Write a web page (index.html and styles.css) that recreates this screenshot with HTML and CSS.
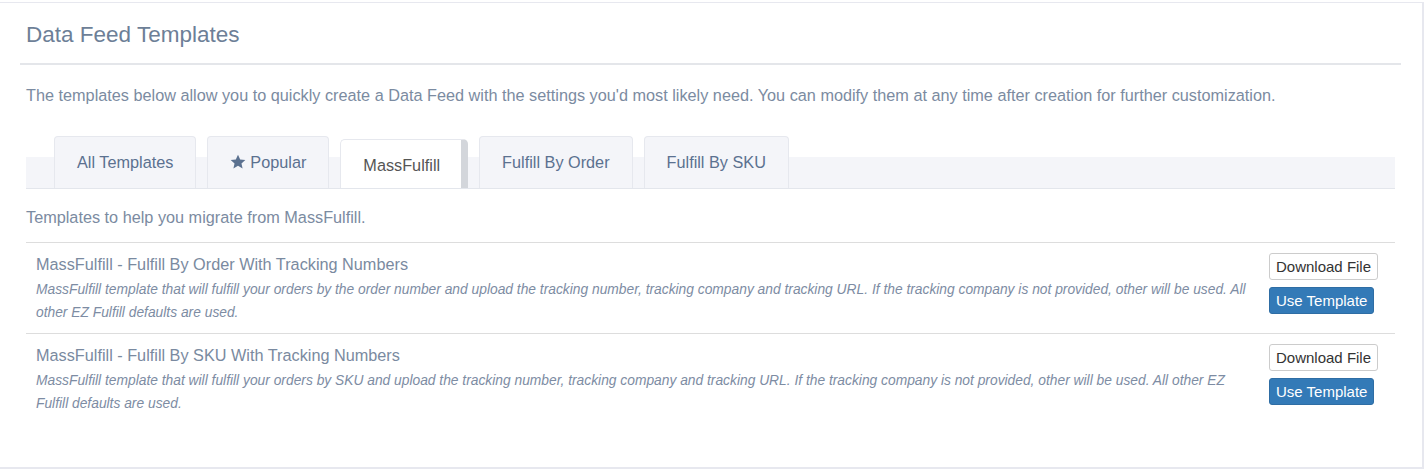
FILE: index.html
```html
<!DOCTYPE html>
<html lang="en">
<head>
    <meta charset="UTF-8">
    <meta name="viewport" content="width=device-width, initial-scale=1.0">
    <title>Data Feed Templates</title>
    <link rel="stylesheet" href="styles.css">
</head>
<body>
    <div class="panel">
        <div class="panel-heading">
            <h3>Data Feed Templates</h3>
        </div>

        <div class="panel-body">
            <p class="intro">The templates below allow you to quickly create a Data Feed with the settings you'd most likely need. You can modify them at any time after creation for further customization.</p>

            <ul class="tabs">
                <li class="tab">All Templates</li>
                <li class="tab">
                    <svg class="star" viewBox="0 0 24 24" width="16" height="16"><path d="M12 1l3.3 7.1 7.7.8-5.8 5.2 1.7 7.7L12 17.8l-6.9 4 1.7-7.7L1 8.9l7.7-.8z"/></svg>
                    Popular
                </li>
                <li class="tab active">MassFulfill</li>
                <li class="tab">Fulfill By Order</li>
                <li class="tab">Fulfill By SKU</li>
            </ul>

            <p class="tab-note">Templates to help you migrate from MassFulfill.</p>

            <div class="template-list">
                <div class="template">
                    <div class="template-info">
                        <div class="template-name">MassFulfill - Fulfill By Order With Tracking Numbers</div>
                        <div class="template-desc">MassFulfill template that will fulfill your orders by the order number and upload the tracking number, tracking company and tracking URL. If the tracking company is not provided, other will be used. All other EZ Fulfill defaults are used.</div>
                    </div>
                    <div class="template-actions">
                        <button class="btn btn-default">Download File</button>
                        <button class="btn btn-primary">Use Template</button>
                    </div>
                </div>
                <div class="template">
                    <div class="template-info">
                        <div class="template-name">MassFulfill - Fulfill By SKU With Tracking Numbers</div>
                        <div class="template-desc">MassFulfill template that will fulfill your orders by SKU and upload the tracking number, tracking company and tracking URL. If the tracking company is not provided, other will be used. All other EZ Fulfill defaults are used.</div>
                    </div>
                    <div class="template-actions">
                        <button class="btn btn-default">Download File</button>
                        <button class="btn btn-primary">Use Template</button>
                    </div>
                </div>
            </div>
        </div>
    </div>
</body>
</html>
```

FILE: styles.css
```css
body {
    margin: 0;
    background-color: #ffffff;
    font-family: "Liberation Sans", Arial, sans-serif;
    color: #7b8ba1;
}

.panel {
    margin-top: 2px;
    height: 464px;
    border-top: 1px solid #e7e8ef;
    border-right: 2px solid #e7e8ef;
    border-bottom: 2px solid #e7e8ef;
}

.panel-heading {
    margin: 0 21px 0 20px;
    padding: 0 6px;
    height: 60px;
    border-bottom: 2px solid #e4e6ea;
    display: flex;
    align-items: center;
}

.panel-heading h3 {
    margin: 0;
    padding-top: 3px;
    font-size: 22.5px;
    font-weight: normal;
    color: #6d7f97;
}

.panel-body {
    padding: 0 27px 0 26px;
}

.intro {
    margin: 19px 0 0;
    font-size: 16.25px;
    line-height: 22px;
}

.tabs {
    list-style: none;
    margin: 30px 0 0;
    padding: 0 0 0 28px;
    display: flex;
    align-items: flex-end;
    gap: 11px;
    height: 52px;
    background: linear-gradient(to bottom, #ffffff 21px, #f4f5f9 21px);
    border-bottom: 1px solid #e3e6ec;
}

.tab {
    height: 51px;
    padding: 0 22px;
    display: flex;
    align-items: center;
    gap: 4px;
    font-size: 16.25px;
    color: #5b7190;
    background-color: #f4f5f9;
    border: 1px solid #e6e8ee;
    border-bottom: none;
    border-radius: 4px 4px 0 0;
}

.tab .star {
    fill: #5b7190;
    margin-top: -2px;
}

.tab.active {
    height: 45px;
    padding: 3px 21px 0 22px;
    background-color: #ffffff;
    color: #555555;
    border-right: 7px solid #d3d6db;
    border-radius: 5px 5px 0 0;
}

.tab-note {
    margin: 17px 0 0;
    font-size: 16.25px;
    line-height: 22px;
}

.template-list {
    margin-top: 14px;
}

.template {
    display: flex;
    align-items: flex-start;
    padding: 10px 17px 9px 10px;
    border-top: 1px solid #dddddd;
}

.template-info {
    flex: 1;
    padding-right: 14px;
}

.template-name {
    font-size: 16.25px;
    line-height: 22px;
    color: #7a8aa0;
    margin-bottom: 3px;
}

.template-desc {
    font-size: 13.8px;
    font-style: italic;
    line-height: 23px;
    color: #7d8ca3;
}

.template-actions {
    width: 109px;
    display: flex;
    flex-direction: column;
    align-items: flex-start;
    gap: 7px;
}

.btn {
    font-family: "Liberation Sans", Arial, sans-serif;
    font-size: 15px;
    line-height: 17px;
    padding: 4px 6px;
    white-space: nowrap;
    border: 1px solid transparent;
    border-radius: 3px;
    cursor: pointer;
}

.btn-default {
    background-color: #ffffff;
    border-color: #cccccc;
    color: #333333;
}

.btn-primary {
    background-color: #337ab7;
    border-color: #2e6da4;
    color: #ffffff;
}

.btn-primary:hover {
    background-color: #286090;
}
```
